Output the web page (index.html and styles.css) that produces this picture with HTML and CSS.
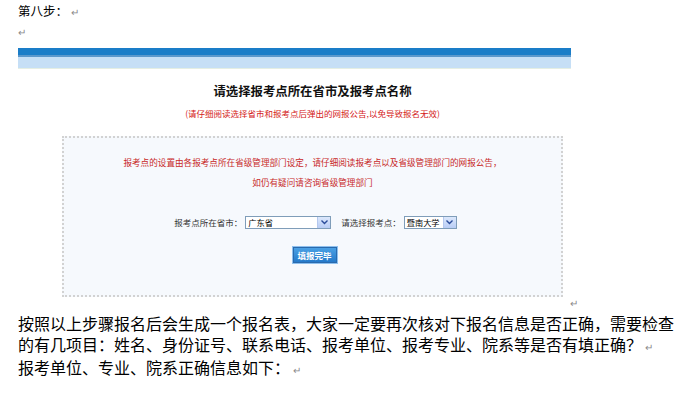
FILE: index.html
```html
<!DOCTYPE html>
<html lang="zh-CN">
<head>
<meta charset="UTF-8" />
<meta name="viewport" content="width=device-width, initial-scale=1" />
<title>第八步</title>
<link rel="stylesheet" href="styles.css">
</head>
<body>

<p class="step">第八步：<span class="mark">↵</span></p>
<p class="blank"><span class="mark">↵</span></p>

<div class="shot">
  <div class="bar">
    <div class="bar-dark"></div>
    <div class="bar-mid"></div>
    <div class="bar-light"></div>
  </div>

  <div class="content">
    <h3 class="title">请选择报考点所在省市及报考点名称</h3>
    <p class="hint">(请仔细阅读选择省市和报考点后弹出的网报公告,以免导致报名无效)</p>

    <div class="panel">
      <p class="notice">报考点的设置由各报考点所在省级管理部门设定，请仔细阅读报考点以及省级管理部门的网报公告，</p>
      <p class="notice">如仍有疑问请咨询省级管理部门</p>

      <div class="pick">
        <span class="label">报考点所在省市：</span>
        <span class="select wide"><span class="value">广东省</span><span class="arrow"><svg width="7" height="5" viewBox="0 0 7 5"><path d="M0.5 0.5 L3.5 3.5 L6.5 0.5" fill="none" stroke="#2b4c9a" stroke-width="1.4"/></svg></span></span>
        <span class="label gap">请选择报考点：</span>
        <span class="select narrow"><span class="value">暨南大学</span><span class="arrow"><svg width="7" height="5" viewBox="0 0 7 5"><path d="M0.5 0.5 L3.5 3.5 L6.5 0.5" fill="none" stroke="#2b4c9a" stroke-width="1.4"/></svg></span></span>
      </div>

      <div class="actions">
        <button class="submit">填报完毕</button>
      </div>
    </div>
  </div>
</div>

<p class="after"><span class="mark">↵</span></p>

<p class="para">按照以上步骤报名后会生成一个报名表，大家一定要再次核对下报名信息是否正确，需要检查的有几项目：姓名、身份证号、联系电话、报考单位、报考专业、院系等是否有填正确？<span class="mark">↵</span><br>报考单位、专业、院系正确信息如下：<span class="mark">↵</span></p>

</body>
</html>
```

FILE: styles.css
```css
body {
  margin: 0;
  padding: 0 0 0 18px;
  background: #fff;
  color: #000;
  font-family: "Noto Sans CJK SC", "Liberation Sans", sans-serif;
}
p {
  margin: 0;
}
.mark {
  color: #8a8a8a;
  font-size: 10px;
  margin-left: 3px;
}
.step {
  font-size: 12.5px;
  line-height: 22px;
}
.blank {
  height: 18px;
  line-height: 18px;
  font-size: 10px;
}
.blank .mark {
  margin-left: 0;
}

.shot {
  width: 553px;
  margin-top: 7px;
}
.bar-dark {
  height: 7px;
  background: #1a7dc8;
}
.bar-mid {
  height: 2px;
  background: #5b98cc;
}
.bar-light {
  height: 11px;
  background: #c6dff6;
  border-bottom: 1px solid #e4eee4;
}

.content {
  margin-left: 44px;
  width: 501px;
  text-align: center;
}
.title {
  margin: 14px 0 0;
  font-size: 12.4px;
  line-height: 16px;
  font-weight: bold;
  color: #111;
}
.hint {
  margin-top: 8px;
  font-size: 8.5px;
  line-height: 12px;
  color: #d42020;
}

.panel {
  margin-top: 17px;
  border: 2px dotted #d2d2d2;
  background: #f6f9fd;
  padding: 14px 0 31px;
}
.notice {
  font-size: 8.6px;
  line-height: 20px;
  color: #c82828;
}

.pick {
  margin-top: 23px;
  display: flex;
  justify-content: center;
  align-items: center;
  height: 14px;
  font-size: 8.5px;
  color: #333;
  padding-left: 6px;
}
.label.gap {
  margin-left: 10px;
}
.select {
  display: flex;
  align-items: center;
  height: 13px;
  box-sizing: border-box;
  border: 1px solid #7f9db9;
  background: #fff;
  margin-left: 3px;
  text-align: left;
  overflow: hidden;
}
.select.wide {
  width: 86px;
}
.select.narrow {
  width: 53px;
}
.select .value {
  flex: 1;
  padding-left: 2px;
  font-size: 8.2px;
  line-height: 11px;
  color: #000;
  white-space: nowrap;
}
.select .arrow {
  flex: none;
  width: 12px;
  height: 11px;
  background: linear-gradient(#dce8fc, #b9cdf5);
  border-left: 1px solid #b5c8ee;
  display: flex;
  align-items: center;
  justify-content: center;
}

.actions {
  margin-top: 17px;
  display: flex;
  justify-content: center;
  padding-left: 4px;
}
.submit {
  width: 46px;
  height: 18px;
  padding: 0;
  border: 1px solid #8ec0ee;
  outline: 1px solid #2a6aad;
  outline-offset: -2px;
  background: linear-gradient(#4da3e6, #2277c8);
  color: #fff;
  font-family: inherit;
  font-size: 8.5px;
  font-weight: bold;
  line-height: 16px;
}

.after {
  width: 560px;
  height: 16px;
  line-height: 12px;
  font-size: 10px;
  text-align: right;
}
.para {
  width: 664px;
  font-size: 16px;
  line-height: 21px;
}
```
